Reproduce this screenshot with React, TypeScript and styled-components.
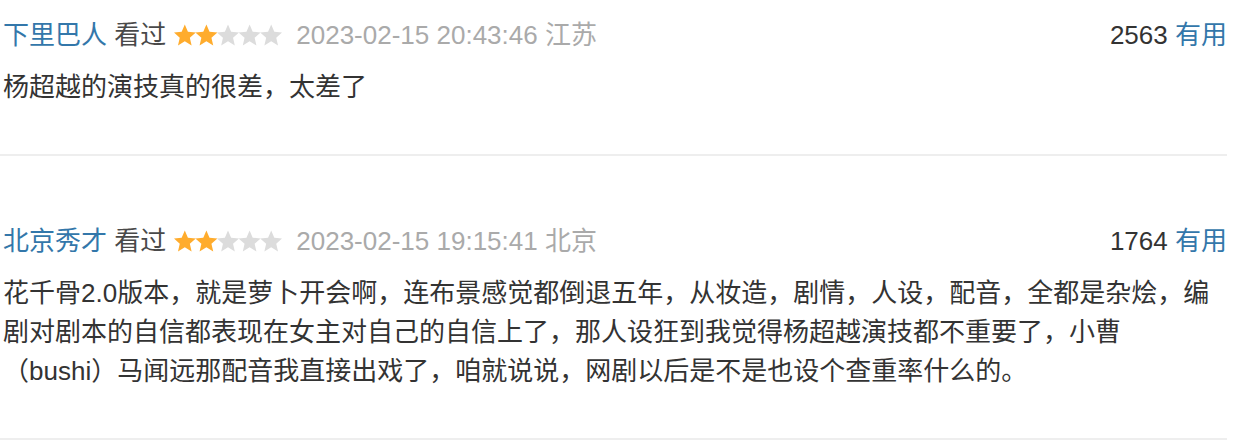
import React from 'react'
import styled, { createGlobalStyle } from 'styled-components'

interface Review {
  id: number
  user: string
  rating: number
  time: string
  location: string
  votes: number
  content: string
}

const reviews: Review[] = [
  {
    id: 1,
    user: '下里巴人',
    rating: 2,
    time: '2023-02-15 20:43:46',
    location: '江苏',
    votes: 2563,
    content: '杨超越的演技真的很差，太差了',
  },
  {
    id: 2,
    user: '北京秀才',
    rating: 2,
    time: '2023-02-15 19:15:41',
    location: '北京',
    votes: 1764,
    content:
      '花千骨2.0版本，就是萝卜开会啊，连布景感觉都倒退五年，从妆造，剧情，人设，配音，全都是杂烩，编剧对剧本的自信都表现在女主对自己的自信上了，那人设狂到我觉得杨超越演技都不重要了，小曹（bushi）马闻远那配音我直接出戏了，咱就说说，网剧以后是不是也设个查重率什么的。',
  },
]

// five-pointed star outline, alternating outer and inner radius
const starPoints = (cx: number, cy: number, outer: number, inner: number) => {
  const pts: string[] = []
  for (let i = 0; i < 10; i++) {
    const r = i % 2 === 0 ? outer : inner
    const a = (Math.PI / 5) * i - Math.PI / 2
    pts.push(`${(cx + r * Math.cos(a)).toFixed(2)},${(cy + r * Math.sin(a)).toFixed(2)}`)
  }
  return pts.join(' ')
}

const Stars: React.FC<{ value: number }> = ({ value }) => (
  <StarsSvg viewBox='0 0 108 22' width={108} height={22}>
    {[0, 1, 2, 3, 4].map((i) => (
      <polygon
        key={i}
        points={starPoints(10.8 + i * 21.6, 12, 11.6, 5.3)}
        fill={i < value ? '#ffac2d' : '#dcdcdc'}
      />
    ))}
  </StarsSvg>
)

const ReviewItem: React.FC<{ review: Review }> = ({ review }) => (
  <Item>
    <Header>
      <Meta>
        <UserLink href='#'>{review.user}</UserLink> <Watched>看过</Watched>
        <Stars value={review.rating} />
        <Time>
          {review.time} {review.location}
        </Time>
      </Meta>
      <Votes>
        <Count>{review.votes}</Count> <UsefulLink href='#'>有用</UsefulLink>
      </Votes>
    </Header>
    <Content>{review.content}</Content>
  </Item>
)

const App: React.FC = () => (
  <>
    <GlobalStyle />
    <List>
      {reviews.map((r) => (
        <ReviewItem key={r.id} review={r} />
      ))}
    </List>
  </>
)

const GlobalStyle = createGlobalStyle`
  body {
    margin: 0;
    background: #fff;
    font-family: "Liberation Sans", "Noto Sans CJK SC", sans-serif;
  }
`

const List = styled.div`
  width: 1227px;
  font-size: 26px;
  line-height: 39px;
  color: #494949;
`

const Item = styled.div`
  padding: 66px 0 47px;
  border-bottom: 2px solid #eeeeee;

  &:first-child {
    padding-top: 16px;
  }
`

const Header = styled.div`
  display: flex;
  justify-content: space-between;
  align-items: center;
  padding-left: 3px;
`

const Meta = styled.div`
  white-space: nowrap;
`

const UserLink = styled.a`
  color: #3377aa;
  text-decoration: none;
`

const Watched = styled.span`
  color: #494949;
  margin-right: 8px;
`

const StarsSvg = styled.svg`
  display: inline-block;
  vertical-align: -2px;
  margin-right: 14px;
`

const Time = styled.span`
  color: #aaaaaa;
`

const Votes = styled.div`
  white-space: nowrap;
`

const Count = styled.span`
  color: #333333;
`

const UsefulLink = styled.a`
  color: #3377aa;
  text-decoration: none;
`

const Content = styled.p`
  margin: 13px 0 0;
  padding: 0 12px 0 3px;
  color: #333333;
`

export default App
